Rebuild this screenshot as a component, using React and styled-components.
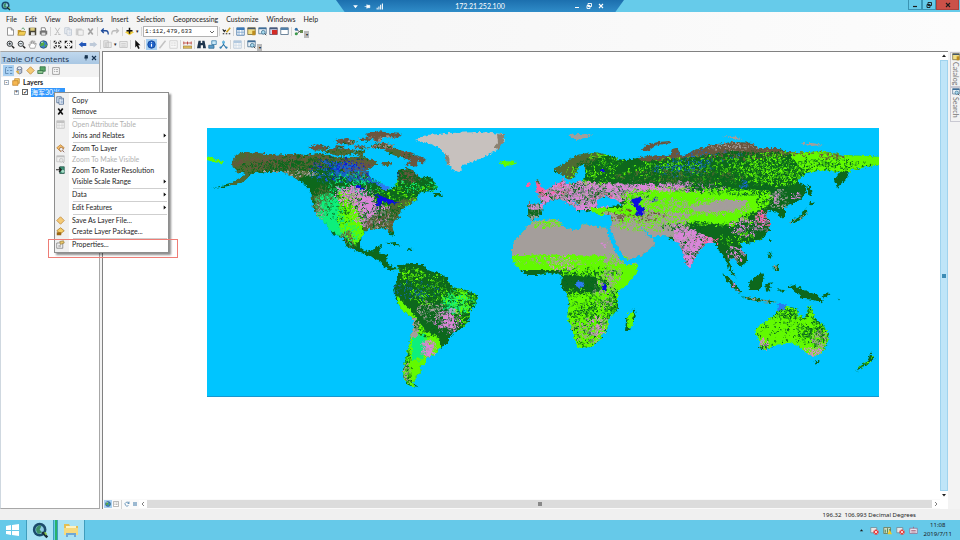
import React from 'react';
import styled, { createGlobalStyle } from 'styled-components';

const GlobalStyle = createGlobalStyle`
  * { box-sizing: border-box; }
  body {
    margin: 0;
    font-family: Lato, "Noto Sans", "Noto Sans CJK SC", sans-serif;
    font-size: 7px;
    line-height: 11px;
    color: #1c1c1c;
    background: #f5f5f5;
  }
  button {
    border: 0;
    padding: 0;
    background: none;
    font: inherit;
    color: inherit;
  }
  svg { display: block; }
`;

const Window = styled.div`
  display: flex;
  flex-direction: column;
  min-height: 100vh;
`;

/* title bar */

const TitleBar = styled.header`
  display: grid;
  grid-template-columns: 1fr 30% 1fr;
  height: 12px;
  background: #66cbea;
`;

const AppLogo = styled.div`
  padding: 1px 0 0 1px;
`;

const RemoteBar = styled.div`
  display: flex;
  align-items: center;
  justify-content: space-between;
  height: 12px;
  padding: 0 16px;
  color: #fff;
  background: linear-gradient(#1c6fae, #2f8cc8);
  clip-path: polygon(0 0, 100% 0, 97% 100%, 3% 100%);
`;

const RemoteButtons = styled.div`
  display: flex;
  gap: 2px;
`;

const RemoteButton = styled.button`
  width: 10px;
  height: 10px;
`;

const WindowButtons = styled.div`
  display: flex;
  justify-content: flex-end;
  align-items: flex-start;
  padding-right: 1px;
`;

const WindowButton = styled.button`
  display: flex;
  align-items: center;
  justify-content: center;
  width: ${(p) => (p.$close ? '23px' : '14px')};
  height: 10px;
  border: 1px solid ${(p) => (p.$close ? '#a9423c' : '#3b94b3')};
  border-top: 0;
  background: ${(p) => (p.$close ? '#cb5148' : '#66cbea')};
`;

/* menu and toolbars */

const MenuBar = styled.nav`
  display: flex;
  gap: 8px;
  height: 13px;
  padding: 1px 6px 0;
  background: linear-gradient(90deg, #f3f3f3, #fcfcfc);
`;

const MenuButton = styled.button`
  line-height: 12px;
`;

const ToolBar = styled.div`
  display: flex;
  align-items: center;
  height: 13px;
  padding-left: 5px;
  background: linear-gradient(90deg, #f3f3f3, #fcfcfc);
`;

const ToolButton = styled.button`
  display: flex;
  align-items: center;
  justify-content: center;
  width: 11px;
  height: 11px;
  background: ${(p) => (p.$active ? '#a8d0f2' : 'none')};
  opacity: ${(p) => (p.disabled ? 0.35 : 1)};
`;

const ViewButton = styled(ToolButton)`
  width: 8px;
  height: 8px;
`;

const Separator = styled.span`
  width: 1px;
  height: 9px;
  margin: 0 1px;
  background: #d4d4d4;
`;

const Caret = styled.span`
  width: 5px;
  font-size: 5px;
  text-align: center;
`;

const ToolBarEnd = styled.span`
  align-self: flex-end;
  width: 5px;
  height: 7px;
  font-size: 4px;
  line-height: 8px;
  text-align: center;
  background: #b9b9b9;
`;

const ScaleBox = styled.div`
  display: grid;
  grid-template-columns: 1fr 8px;
  align-items: center;
  width: 75px;
  height: 11px;
  border: 1px solid #b2b2b2;
  background: #fff;

  > * { grid-row: 1; }
  > svg { grid-column: 2; pointer-events: none; }
`;

const ScaleSelect = styled.select`
  appearance: none;
  grid-column: 1 / 3;
  height: 9px;
  padding: 0 1px;
  border: 0;
  background: none;
  font-family: "Liberation Mono", monospace;
  font-size: 6px;
  color: #222;
`;

/* work area */

const Main = styled.main`
  display: grid;
  grid-template-columns: 100px 1fr 10px;
  column-gap: 2px;
  flex: 1;
  background: #f3f3f3;
`;

const Panel = styled.aside`
  position: relative;
  border: 1px solid #a7a7a7;
  border-left-color: #cfd8e0;
  background: #fff;
`;

const PanelTitle = styled.div`
  display: flex;
  align-items: center;
  height: 12px;
  padding: 0 1px;
  background: linear-gradient(#c0d8ee, #a9c7e3);
  color: #16314e;
`;

const PanelName = styled.h2`
  flex: 1;
  margin: 0;
  font-family: "Open Sans", "Noto Sans", sans-serif;
  font-size: 8px;
  font-weight: 400;
  white-space: nowrap;
`;

const PanelButton = styled(ToolButton)`
  width: 8px;
`;

const PanelTools = styled.div`
  display: flex;
  align-items: center;
  height: 13px;
  padding-left: 2px;
  background: #f2f2f2;
`;

const Tree = styled.ul`
  margin: 0;
  padding: 0 0 0 3px;
  list-style: none;
`;

const TreeRow = styled.li`
  display: flex;
  align-items: center;
  gap: 3px;
  height: 10px;
  padding-left: ${(p) => (p.$depth ? '10px' : '0')};
  font-weight: ${(p) => (p.$depth ? 400 : 700)};
`;

const Expander = styled.button`
  width: 5px;
  height: 5px;
  border: 1px solid #a8b3bd;
  font-size: 5px;
  line-height: 3px;
`;

const LayerLabel = styled.label`
  display: flex;
  align-items: center;
  gap: 3px;
`;

const LayerCheck = styled.input`
  appearance: none;
  width: 6px;
  height: 6px;
  margin: 0;
  border: 1px solid #666;
  background: #fff;

  &:checked::before {
    content: "✓";
    display: block;
    font-family: "DejaVu Sans", sans-serif;
    font-size: 6px;
    font-weight: 700;
    line-height: 4px;
  }
`;

const LayerName = styled.span`
  width: 34px;
  overflow: hidden;
  line-height: 9px;
  white-space: nowrap;
  color: #fff;
  background: #3297fd;
`;

/* context menu, opened over the layer row */

const ContextMenu = styled.div`
  position: absolute;
  z-index: 2;
  top: 40px;
  left: 53px;
  width: 115px;
  padding: 2px 1px;
  border: 1px solid #8e8e8e;
  background: linear-gradient(90deg, #f0f0f0 14px, #fff 14px);
  box-shadow: 2px 2px 2px rgba(0, 0, 0, 0.45);
`;

const ContextItem = styled.button`
  display: grid;
  grid-template-columns: 11px 1fr 5px;
  align-items: center;
  column-gap: 5px;
  width: 100%;
  height: 11px;
  color: ${(p) => (p.disabled ? '#b0b0b0' : '#1c1c1c')};
  text-align: left;
  white-space: nowrap;
`;

const ItemIcon = styled.span`
  opacity: ${(p) => (p.$off ? 0.35 : 1)};
  filter: ${(p) => (p.$off ? 'grayscale(1)' : 'none')};
`;

const ContextLine = styled.div`
  height: 1px;
  margin: 1px 0 0 17px;
  background: #cfcfcf;
`;

const Marker = styled.div`
  position: absolute;
  right: -10px;
  bottom: -6px;
  left: -7px;
  height: 19px;
  border: 1px solid #ee7d76;
  pointer-events: none;
`;

/* data view */

const DataView = styled.section`
  display: grid;
  grid-template-columns: 1fr 8px;
  grid-template-rows: 1fr 10px;
  border-top: 1px solid #818181;
  border-left: 1px solid #818181;
  background: #fff;
`;

const Canvas = styled.div`
  padding: 76px 61px 0 104px;
`;

const VScroll = styled.div`
  display: flex;
  flex-direction: column;
  background: #f5f5f5;
`;

const HScroll = styled.div`
  display: flex;
  align-items: center;
  padding-left: 1px;
  background: #fafafa;
`;

const ScrollArrow = styled.button`
  display: flex;
  align-items: center;
  justify-content: center;
  flex: none;
  width: 8px;
  height: 8px;
  background: #fff;
`;

const VThumb = styled.div`
  display: flex;
  align-items: center;
  justify-content: center;
  flex: 1;
  border: 1px solid #9fd3ee;
  background: #bfe5f8;
`;

const HThumb = styled.div`
  display: flex;
  align-items: center;
  justify-content: center;
  flex: 1;
  height: 8px;
  background: #dcdcdc;
`;

const Grip = styled.span`
  width: 4px;
  height: 4px;
  background: ${(p) => p.$color};
`;

const SideTabs = styled.div`
  display: flex;
  flex-direction: column;
  align-items: flex-end;
  padding-top: 1px;
`;

const SideTab = styled.button`
  display: flex;
  flex-direction: column;
  align-items: center;
  gap: 1px;
  width: 10px;
  height: 35px;
  border: 1px solid #c9c9d2;
  border-right: 0;
  color: #777;
`;

const SideLabel = styled.span`
  line-height: 8px;
  writing-mode: vertical-rl;
`;

const StatusBar = styled.div`
  display: flex;
  justify-content: flex-end;
  height: 11px;
  padding-right: 44px;
  background: #f0f0f0;
  font-family: "Noto Sans", "Open Sans", sans-serif;
  font-size: 6px;
  line-height: 12px;
  white-space: pre;
`;

/* task bar */

const TaskBar = styled.footer`
  display: flex;
  align-items: center;
  height: 20px;
  background: #66c9e9;
`;

const TaskButton = styled.button`
  display: flex;
  align-items: center;
  justify-content: center;
  width: ${(p) => (p.$running ? '28px' : '25px')};
  height: 20px;
  margin-right: 1px;
  border-right: ${(p) => (p.$running ? '1px solid #3f9dbd' : '0')};
  border-left: ${(p) => (p.$running ? '1px solid #3f9dbd' : '0')};
  background: ${(p) => (p.$active ? '#a9e2f4' : 'none')};
`;

const GreenTab = styled.span`
  width: 2px;
  height: 20px;
  background: #27b36b;
`;

const Tray = styled.div`
  display: flex;
  align-items: center;
  gap: 2px;
  margin-left: auto;
  padding-right: 8px;
`;

const Clock = styled.time`
  margin-left: 3px;
  font-family: "Noto Sans", "Open Sans", sans-serif;
  font-size: 6px;
  line-height: 9px;
  text-align: center;
`;

/* 12 x 12 glyphs */
const glyphs = {
  page: <path d="M2 1h5l3 3v7H2zM7 1v3h3" fill="#fff" stroke="#777" />,
  open: <><path d="M1 4h4l1 1h4v6H1z" fill="#c99a28" /><path d="M3 6h9l-2 5H1z" fill="#f1cd55" stroke="#8b6a1b" strokeWidth=".6" /><path d="M6 3c2-3 4-1 4 1" fill="none" stroke="#2c7b3c" /></>,
  save: <><path d="M1 1h10v10H1z" fill="#4a4638" /><path d="M3 1h6v4H3z" fill="#d8c979" /><path d="M4 7h5v4H4z" fill="#e7e7e7" /></>,
  print: <><path d="M3 1h5l1 4H3z" fill="#fff" stroke="#666" /><path d="M1 5h10v5H1z" fill="#777" /><path d="M3 7h6v4H3z" fill="#ddd" stroke="#444" strokeWidth=".6" /></>,
  cut: <path d="M3 1l5 8M9 1L4 9M2 10h3M7 10h3" fill="none" stroke="#555" strokeWidth="1.3" />,
  copy: <><path d="M1 1h6v8H1z" fill="#dce8f5" stroke="#47648c" /><path d="M4 3h6v8H4z" fill="#fff" stroke="#47648c" /><path d="M6 5h3M6 7h3M6 9h3" stroke="#5a83b8" /></>,
  paste: <><path d="M1 2h8v9H1z" fill="#888" /><path d="M4 4h7v7H4z" fill="#eee" stroke="#666" /></>,
  x: <path d="M3 2l6 8M9 2l-6 8" stroke="#111" strokeWidth="2.2" />,
  undo: <path d="M2 5h6q3 0 3 5M5 2L2 5l3 3" fill="none" stroke="#1e4b9b" strokeWidth="1.7" />,
  redo: <path d="M10 5H4q-3 0-3 5M7 2l3 3-3 3" fill="none" stroke="#555" strokeWidth="1.7" />,
  add: <><path d="M6 4l6 3-6 4-6-4z" fill="#f4d03a" /><path d="M6 1v8M2 5h8" stroke="#111" strokeWidth="2" /></>,
  edit: <><path d="M1 3l2 3 2-2M1 9h2M5 9h2M9 9h2" fill="none" stroke="#222" strokeWidth="1.5" /><path d="M6 7l5-6" stroke="#c9a020" strokeWidth="2" /></>,
  table: <><path d="M1 1h10v10H1z" fill="#fff" stroke="#33669c" /><path d="M1 1h10v3H1z" fill="#3a78b8" /><path d="M1 7h10M4 4v7M8 4v7" stroke="#75a1cb" /></>,
  catalog: <><path d="M1 1h10v9H1z" fill="#f2df87" stroke="#6f6233" /><path d="M1 1h10v2H1z" fill="#42576b" /><path d="M7 5h4v6H7z" fill="#bd8c1e" /></>,
  search: <><path d="M1 1h10v8H1z" fill="#eef6fb" stroke="#456b8c" /><path d="M1 1h10v2H1z" fill="#3f6d98" /><circle cx="7" cy="7" r="2.5" fill="#a9d9ed" stroke="#356a8a" /><path d="M9 9l2 2" stroke="#222" /></>,
  toolbox: <><path d="M1 1h10v9H1z" fill="#d8d8ea" stroke="#444e6c" /><path d="M4 4h7v6H4z" fill="#d32b25" /><path d="M1 1h10v2H1z" fill="#44597c" /></>,
  python: <><path d="M1 1h10v9H1z" fill="#fff" stroke="#41607d" /><path d="M1 1h10v3H1z" fill="#5180aa" /></>,
  model: <><path d="M3 3l4 3-4 4M7 6h4" fill="none" stroke="#333" /><circle cx="3" cy="3" r="2" fill="#3170a8" /><circle cx="3" cy="9" r="2" fill="#3b9b4e" /><path d="M8 4h4v4H8z" fill="#688a4f" /></>,
  zoomIn: <><circle cx="5" cy="5" r="3.5" fill="#eef8ff" stroke="#333" strokeWidth="1.3" /><path d="M8 8l3 3" stroke="#222" strokeWidth="2" /><path d="M3 5h4M5 3v4" stroke="#111" /></>,
  zoomOut: <><circle cx="5" cy="5" r="3.5" fill="#eef8ff" stroke="#333" strokeWidth="1.3" /><path d="M8 8l3 3" stroke="#222" strokeWidth="2" /><path d="M3 5h4" stroke="#111" /></>,
  hand: <path d="M3 11L1 6l2 1V3l1-1 1 3V1h1l1 4 1-4 1 1v4l1-2 1 1-2 6z" fill="#fff" stroke="#777" strokeWidth=".8" />,
  globe: <><circle cx="6" cy="6" r="5" fill="#3b83c7" stroke="#24456b" /><path d="M3 3q3-2 4 1T4 8 2 6zM8 6l3 1-3 3z" fill="#55a945" /><circle cx="4" cy="3" r="1" fill="#d8f0ff" /></>,
  zoomFixedIn: <path d="M1 1h3L1 4zM11 1v3L8 1zM1 11V8l3 3zM11 11H8l3-3zM5 5L2 5 5 2zM7 5V2l3 3zM5 7v3L2 7zM7 7h3l-3 3z" fill="#111" />,
  zoomFixedOut: <path d="M1 1h4L1 5zM11 1v4L7 1zM1 11V7l4 4zM11 11H7l4-4zM5 5H4V4h1zM7 5V4h1v1zM5 7v1H4V7zM7 7h1v1H7z" fill="#111" />,
  back: <path d="M1 6l5-4v2h5v4H6v2z" fill="#2458b8" />,
  next: <path d="M11 6L6 2v2H1v4h5v2z" fill="#5d7faa" />,
  select: <><path d="M1 1h6v9H1zM5 3h6v7H5z" fill="#ddd" stroke="#555" /><path d="M3 3v7" stroke="#555" /></>,
  clear: <path d="M1 2h10v8H1zM3 5h6M3 8h6" fill="#ddd" stroke="#555" />,
  arrow: <path d="M3 0v10l2-2 2 4 2-1-2-4h3z" fill="#111" />,
  info: <><circle cx="6" cy="6" r="5" fill="#1e62c8" stroke="#123f8d" /><path d="M6 3v1M6 5v4" stroke="#fff" strokeWidth="1.5" /></>,
  link: <path d="M2 11L10 1" stroke="#666" strokeWidth="2" />,
  measure: <><path d="M0 8h12v3H0z" fill="#e6c463" stroke="#7c5e1b" strokeWidth=".7" /><path d="M1 4h10M1 2v4M11 2v4M6 2v4" stroke="#b22b24" /></>,
  find: <path d="M2 1h3v3h2V1h3l2 10H8V7H5v4H0z" fill="#20364e" />,
  route: <><path d="M5 1h6v5H5z" fill="#cbe8f7" stroke="#3179aa" /><path d="M1 7h7v4H1z" fill="#5a9bc8" stroke="#2c658e" /></>,
  xy: <><path d="M6 1v5M6 6l-4 5M6 6l4 5" fill="none" stroke="#2470a4" strokeWidth="1.5" /><circle cx="6" cy="3" r="2" fill="#65b5df" /><circle cx="2" cy="10" r="1.5" fill="#3a83b5" /><circle cx="10" cy="10" r="1.5" fill="#3a83b5" /></>,
  diamond: <path d="M6 1l5 5-5 5-5-5z" fill="#f4ca76" stroke="#bd8636" />,
  zoomLayer: <><path d="M6 1l5 4-5 5-5-5z" fill="#f2bd69" stroke="#b97e35" /><circle cx="7" cy="7" r="2.5" fill="#eee" stroke="#9c6a44" /><path d="M9 9l2 2" stroke="#744" /></>,
  raster: <><path d="M5 1h6v9H5z" fill="#3a9174" stroke="#28574b" /><path d="M0 5h7M4 2l3 3-3 3" fill="none" stroke="#222" strokeWidth="1.6" /><circle cx="9" cy="7" r="2" fill="#a8dcc8" /></>,
  selection: <><path d="M4 1h7v6H4z" fill="#58a565" stroke="#2d6b40" /><path d="M1 6h7v4H1z" fill="#8cc38d" stroke="#2d6b40" /></>,
  pack: <><path d="M6 1l5 4-5 4-5-4z" fill="#f5cd65" stroke="#ad7a26" /><path d="M1 7h6v4H1z" fill="#9b6613" /></>,
  props: <><path d="M1 4h8v7H1z" fill="#fff" stroke="#777" /><path d="M3 7h4M3 9h4" stroke="#888" /><path d="M5 2l5-1 1 3-5 2z" fill="#e7c568" stroke="#7a6023" strokeWidth=".7" /></>,
  layers: <><path d="M4 1h7v7H4z" fill="#f7cf6a" stroke="#bb7d25" /><path d="M1 4h8v7H1z" fill="#f6b751" stroke="#bb7d25" /></>,
  cylinder: <><path d="M3 3v6q3 3 6 0V3z" fill="#b8c2d5" stroke="#596783" /><ellipse cx="6" cy="3" rx="3" ry="2" fill="#edf2f8" stroke="#596783" /><path d="M1 7l4-1v5z" fill="#e1b23d" /></>,
  list: <path d="M2 2h2M6 2h5M4 6h2M8 6h3M4 10h2M8 10h3M2 3v7h2" fill="none" stroke="#527ca7" />,
  options: <path d="M1 1h10v10H1zM3 4h2M6 4h3M3 7h2M6 7h3" fill="#fff" stroke="#777" />,
  tray: <><path d="M1 2h8v7H1z" fill="#e8e8e8" stroke="#6b8592" /><circle cx="8" cy="8" r="3.5" fill="#e23e3e" /><path d="M6 6l4 4M10 6l-4 4" stroke="#fff" /></>,
  signal: <path d="M2 11V8M5 11V6M8 11V3M11 11V1" stroke="currentColor" strokeWidth="1.8" />,
  warn: <><path d="M1 2h9v8H1z" fill="#cfd7c2" stroke="#68744c" /><path d="M3 9V5M6 9V3M9 9V4" stroke="#28722c" /><path d="M9 5l3 6H6z" fill="#f1cb22" /></>,
  keyboard: <><path d="M1 3h10v7H1z" fill="#e8e4ef" stroke="#8f6d8c" /><path d="M3 6h6M3 8h6M6 3V1" stroke="#a05a72" /></>,
  pin: <path d="M4 1h5v5H4zM2 6h8M6 6v5" fill="currentColor" stroke="currentColor" strokeWidth="1.3" />,
  chevron: <path d="M2 4l4 4 4-4" fill="none" stroke="#444" strokeWidth="1.6" />,
  down: <path d="M2 4h8L6 9z" fill="currentColor" />,
  up: <path d="M2 8h8L6 3z" fill="currentColor" />,
  left: <path d="M8 2L4 6l4 4" fill="none" stroke="#555" strokeWidth="1.5" />,
  right: <path d="M4 2l4 4-4 4" fill="none" stroke="#555" strokeWidth="1.5" />,
  play: <path d="M4 1l6 5-6 5z" fill="#111" />,
  pinSide: <path d="M1 6h4M5 2v8M5 4h5v4H5z" fill="currentColor" stroke="currentColor" />,
  minus: <path d="M2 9h8" stroke="currentColor" strokeWidth="2.4" />,
  restore: <path d="M4 1h7v6H4zM2 5h6v6H2z" fill="none" stroke="currentColor" strokeWidth="1.8" />,
  close: <path d="M2 2l8 8M10 2l-8 8" stroke="currentColor" strokeWidth="2.2" />,
  refresh: <path d="M10 5A4 4 0 1 0 9 9M10 1v4H7" fill="none" stroke="#3f79a8" strokeWidth="1.4" />,
  pause: <path d="M4 2v8M8 2v8" stroke="#3f79a8" strokeWidth="2" />,
};

const Glyph = ({ name, size = 9 }) => (
  <svg width={size} height={size} viewBox="0 0 12 12" aria-hidden="true">{glyphs[name]}</svg>
);

const ArcLogo = ({ size }) => (
  <svg width={size} height={size} viewBox="0 0 20 20" aria-hidden="true">
    <circle cx="9" cy="9" r="8" fill="#1c4c6c" />
    <circle cx="9" cy="9" r="5" fill="#8ccbe3" />
    <path d="M5 7q3-5 6-2l-2 4 3 3-4 2q-4-2-3-7z" fill="#3d8f65" />
    <path d="M12 12l6 6" stroke="#182f3a" strokeWidth="3" />
    <path d="M15 12l2 3" stroke="#8bc34a" strokeWidth="2" />
  </svg>
);

const standardTools = [
  'page', 'open', 'save', 'print', '|', '-cut', '-copy', '-paste', '-x', '|', 'undo', '-redo', '|',
  'add', 'v', '|', 'scale', '|', 'edit', '|', 'table', 'catalog', 'search', 'toolbox', 'python', '|', 'model', 'end',
];

const navTools = [
  'zoomIn', 'zoomOut', 'hand', 'globe', '|', 'zoomFixedIn', 'zoomFixedOut', '|', 'back', '-next', '|',
  '-select', 'v', '-clear', '|', 'arrow', '|', '*info', '-link', '-options', '|', 'measure', '|',
  'find', 'route', 'xy', '|', '-table', '|', 'search', 'end',
];

const renderTool = (tool, i) => {
  if (tool === '|') return <Separator key={i} />;
  if (tool === 'v') return <Caret key={i}>▾</Caret>;
  if (tool === 'end') return <ToolBarEnd key={i}>▾</ToolBarEnd>;
  if (tool === 'scale') {
    return (
      <ScaleBox key={i}>
        <ScaleSelect aria-label="Map scale">
          <option>1:112,479,633</option>
        </ScaleSelect>
        <Glyph name="chevron" size={6} />
      </ScaleBox>
    );
  }
  const name = tool.replace(/^[-*]/, '');
  return (
    <ToolButton key={i} aria-label={name} disabled={tool[0] === '-'} $active={tool[0] === '*'}>
      <Glyph name={name} />
    </ToolButton>
  );
};

const contextItems = [
  { text: 'Copy', icon: 'copy' },
  { text: 'Remove', icon: 'x' },
  null,
  { text: 'Open Attribute Table', icon: 'table', off: true },
  { text: 'Joins and Relates', sub: true },
  null,
  { text: 'Zoom To Layer', icon: 'zoomLayer' },
  { text: 'Zoom To Make Visible', icon: 'search', off: true },
  { text: 'Zoom To Raster Resolution', icon: 'raster' },
  { text: 'Visible Scale Range', sub: true },
  null,
  { text: 'Data', sub: true },
  null,
  { text: 'Edit Features', sub: true },
  null,
  { text: 'Save As Layer File...', icon: 'diamond' },
  { text: 'Create Layer Package...', icon: 'pack' },
  null,
  { text: 'Properties...', icon: 'props' },
];

/* land cover map */

const forest = '#08681d';
const lime = '#62fa05';
const tundra = '#6b573f';
const bare = '#a49e9b';
const crop = '#d986d8';
const mint = '#10ef7c';
const water = '#0808e0';
const wetland = '#1767c8';
const urban = '#ff5d9b';
const ocean = '#00c5ff';
const olive = '#4f6a30';

const land = {
  america: 'M232 162L236 155 243 152 257 153 272 155 290 154 305 155 320 153 335 157 350 158 362 156 372 160 378 164 367 170 370 178 380 182 387 189 392 188 397 183 398 170 407 168 413 170 420 178 430 176 437 186 437 190 420 193 417 200 407 206 401 210 399 217 392 224 394 236 390 235 386 228 376 229 367 229 362 236 360 247 367 252 373 250 376 246 382 245 378 253 387 255 388 265 397 268 394 271 386 268 380 262 373 257 358 252 347 247 342 238 333 235 323 220 317 217 313 207 311 192 303 183 293 177 283 172 267 172 253 173 243 182 225 187 210 188 230 184 246 174 237 172 233 167Z',
  arctic: 'M308 147L318 144 330 147 324 151 312 150ZM323 152L334 148 352 149 356 153 340 156ZM334 140L346 138 358 142 350 145 338 143ZM358 138L372 137 370 142 361 141ZM364 134L378 131 402 134 398 138 384 137 378 142 370 138ZM371 145L382 142 394 145 390 149 374 149ZM384 150L392 147 400 150 413 153 427 160 423 164 417 161 418 167 405 165 410 161 400 157 390 154ZM381 162L391 162 390 166 383 166ZM356 150L366 151 362 156 355 154ZM352 146L364 145 370 148 358 149ZM336 145L346 146 344 148 335 148Z',
  south: 'M398 265L410 264 423 264 427 270 440 273 447 278 452 287 467 290 477 295 477 302 470 312 468 322 462 328 453 333 448 342 443 347 437 350 435 355 427 357 427 363 420 367 421 372 415 378 413 383 419 387 410 386 404 380 403 370 407 353 410 340 413 328 413 318 402 310 395 298 393 290 397 280 399 272Z',
  africa: 'M532 222L553 219 562 221 561 226 572 230 580 229 583 224 597 227 607 228 610 240 615 250 623 260 625 265 638 263 637 272 627 285 618 292 618 300 618 310 610 317 608 327 602 337 593 347 580 348 576 345 572 330 567 317 569 303 567 293 561 287 562 275 550 273 537 275 527 275 520 270 513 262 512 253 513 243 520 235 527 227Z',
  eurasia: 'M528 203L543 204 540 199 537 192 548 189 553 184 562 182 563 178 566 184 583 181 586 175 585 170 583 163 578 167 575 178 568 180 563 175 555 173 555 168 567 162 577 155 593 152 610 155 618 159 627 160 640 157 660 155 670 156 672 149 677 148 682 157 690 152 710 145 733 142 753 143 757 148 780 148 787 152 810 152 823 151 843 155 867 156 881 157 881 165 867 167 850 170 847 178 837 188 834 180 840 172 823 170 807 173 800 178 798 183 807 186 805 195 797 202 785 207 785 217 780 218 777 212 768 210 765 215 770 220 770 230 762 240 748 243 740 243 743 252 747 255 747 262 740 267 733 258 729 260 732 270 737 278 730 273 727 263 723 255 718 250 715 243 707 243 697 254 693 262 689 269 685 262 682 250 678 243 672 240 665 236 655 236 653 241 655 244 643 255 626 260 617 245 610 233 612 223 611 215 598 215 592 210 588 212 583 210 578 204 570 198 577 205 583 209 578 213 574 207 565 202 560 199 550 201 543 206 542 213 532 221 528 217Z',
  australia: 'M755 328L765 322 775 315 780 308 788 307 797 308 798 315 805 318 808 308 811 305 815 318 823 325 829 333 828 342 822 353 813 357 805 353 800 347 790 343 777 345 765 350 759 348 760 342 756 335Z',
  islands: 'M635 308L636 315 630 330 625 330 626 318ZM748 282L762 272 764 277 760 290 750 290ZM722 274L729 277 742 292 740 294 731 286ZM741 296L760 299 778 302 770 303 748 300ZM765 283L774 282 769 285 772 291 768 289 766 293ZM776 289L786 290 782 292ZM788 286L795 285 800 288 817 295 824 303 813 300 803 299 797 293ZM769 251L772 254 771 259 768 257ZM773 266L779 265 779 272 774 270ZM808 184L811 186 812 195 808 196ZM808 202L814 202 811 206ZM789 222L800 216 806 208 808 213 801 220 791 224ZM814 361L820 361 816 366ZM870 352L875 358 864 367 856 371 859 366 868 361ZM383 243L395 242 402 246 394 245ZM407 248L415 249 409 251ZM433 193L442 193 443 197 434 196ZM769 238L771 241 769 243ZM821 297L828 292 830 294 824 298ZM837 297L840 299 839 301Z',
};

const patches = [
  // north america
  [olive, 'M230 150H400V168L320 166 290 185H230Z'], [wetland, 'M320 160L362 164 380 184 350 182Z'],
  [mint, 'M314 196L334 192 352 220 356 244 318 224Z'], [lime, 'M338 190L354 200 364 232 356 246 340 230Z'],
  [crop, 'M334 186L360 188 376 204 396 208 380 216 364 222 356 206Z'], [olive, 'M364 222L398 200 420 198 394 232 364 232Z'],
  // south america
  [lime, 'M396 295L415 315 425 330 440 338 440 352 412 388 400 380 410 340Z'], [mint, 'M444 297L468 295 466 312 450 313ZM412 336L426 334 424 358 412 360Z'],
  [bare, 'M411 316L420 322 417 338 409 338Z'], [crop, 'M442 314L454 316 454 328 440 328ZM422 341L434 345 430 357 423 355Z'],
  // africa and arabia
  [bare, 'M508 216H656V262H624L604 256 570 255H508Z'], [forest, 'M518 270H562V278H526ZM560 275L596 277 600 290 592 294H562Z'],
  // europe and asia
  [olive, 'M550 165L570 150H610L594 162 570 184Z'],
  [crop, 'M520 198L560 178 600 183 660 184 694 182 690 188 636 196 600 210H520Z'],
  [lime, 'M628 194L650 190 690 192 720 188 768 190 774 198 766 208 742 216 732 226 690 220 640 228 600 220 590 208 622 208Z'],
  [tundra, 'M636 146H670L690 140H770L784 152 730 151 690 158 640 161Z'],
  [bare, 'M690 208L716 200 748 200 744 206 722 212 698 212ZM640 210L690 214 690 236 642 238Z'],
  [bare, 'M604 212L636 216 660 240 656 265H604Z'],
  [crop, 'M674 224L694 230 714 240 712 248 690 272 674 244ZM774 193L782 192 778 204 774 205Z'],
  [lime, 'M786 150L881 152V172H830L804 172Z'],
];

const lakes = [
  [water, 'M631 199L642 197 642 201 638 204 644 209 643 215 635 216 637 210 632 204Z'],
  [water, 'M603 284l4 1-1 5h-4zM376 194l10 4 14 5-8 1-10-2-3 5-3-1 2-7zM356 184l7 3 2 4-8-3zM600 169h5v3h-5z'],
  ['#2b7bf0', 'M577 280l5 1 2 5-5 3-4-3zM778 304h9l-3 6-7 1zM378 182l12 5-4 4-9-6z'],
  [ocean, 'M597 200L606 196 609 199 615 199 622 205 610 206 597 207ZM609 228L614 237 618 250 625 260 621 260 614 249 608 235ZM640 227L647 232 654 238 648 236Z'],
];

// colour, centre x, centre y, radius x, radius y, density
const scatters = [
  [tundra, 285, 160, 55, 9, 0.5], [forest, 275, 168, 36, 8, 0.4], [tundra, 370, 165, 28, 12, 0.6], [water, 340, 168, 28, 12, 0.13],
  [tundra, 408, 174, 12, 8, 0.5], [forest, 340, 183, 32, 12, 0.35], [mint, 360, 182, 34, 12, 0.15], [wetland, 335, 172, 26, 10, 0.2],
  [olive, 322, 200, 10, 14, 0.4], [forest, 340, 210, 12, 14, 0.22], [mint, 330, 215, 14, 15, 0.35], [lime, 350, 215, 12, 24, 0.35],
  [mint, 344, 232, 14, 14, 0.25], [tundra, 316, 210, 4, 14, 0.3],
  [crop, 354, 195, 18, 10, 0.35], [crop, 370, 212, 18, 14, 0.35], [bare, 378, 220, 20, 10, 0.2], [forest, 385, 215, 20, 14, 0.3],
  [tundra, 347, 240, 8, 10, 0.3], [bare, 318, 212, 5, 11, 0.2], [tundra, 385, 222, 18, 8, 0.25], [lime, 405, 195, 30, 12, 0.12],
  [forest, 362, 204, 20, 12, 0.1], [forest, 310, 160, 30, 8, 0.25], [water, 392, 176, 10, 6, 0.08], [mint, 415, 186, 20, 8, 0.1],
  [forest, 365, 252, 28, 10, 0.55], [bare, 290, 173, 30, 3, 0.3], [lime, 408, 272, 14, 5, 0.35], [wetland, 415, 290, 22, 9, 0.16],
  [lime, 430, 280, 28, 6, 0.12], [mint, 457, 302, 16, 11, 0.4], [crop, 447, 320, 13, 12, 0.4], [lime, 465, 305, 12, 20, 0.3],
  [forest, 425, 320, 12, 15, 0.3], [bare, 432, 310, 14, 10, 0.25], [lime, 440, 295, 30, 10, 0.2], [forest, 407, 370, 4, 20, 0.5],
  [crop, 428, 348, 7, 8, 0.35], [forest, 445, 328, 15, 12, 0.25], [mint, 418, 348, 7, 12, 0.25], [bare, 406, 375, 4, 13, 0.25],
  [forest, 458, 304, 18, 14, 0.15], [bare, 428, 348, 8, 8, 0.15], [forest, 425, 290, 26, 12, 0.15],
  [forest, 585, 310, 30, 35, 0.22], [crop, 564, 263, 18, 7, 0.2], [bare, 612, 270, 9, 12, 0.35], [forest, 590, 272, 30, 5, 0.25],
  [forest, 613, 304, 7, 14, 0.35], [bare, 590, 330, 22, 12, 0.2], [crop, 600, 330, 10, 14, 0.25], [bare, 604, 290, 10, 18, 0.25],
  [crop, 604, 243, 3, 5, 0.2], [lime, 604, 262, 30, 7, 0.4], [forest, 583, 283, 22, 9, 0.3], [lime, 545, 223, 15, 4, 0.4],
  [lime, 577, 298, 14, 10, 0.3], [lime, 540, 257, 28, 3, 0.3], [bare, 560, 260, 46, 4, 0.15],
  [bare, 535, 212, 9, 9, 0.3], [forest, 536, 210, 10, 9, 0.25], [urban, 552, 190, 16, 7, 0.35], [urban, 602, 196, 10, 4, 0.3],
  [forest, 590, 192, 55, 14, 0.24], [bare, 595, 195, 60, 10, 0.2], [lime, 605, 160, 16, 9, 0.3], [forest, 600, 168, 24, 10, 0.5],
  [lime, 590, 175, 32, 9, 0.12], [wetland, 683, 168, 28, 8, 0.25], [lime, 725, 170, 90, 14, 0.13], [olive, 680, 176, 60, 6, 0.3],
  [forest, 684, 180, 40, 9, 0.35], [crop, 680, 187, 40, 5, 0.3], [forest, 735, 182, 50, 12, 0.35], [tundra, 832, 155, 12, 4, 0.5],
  [lime, 675, 196, 50, 9, 0.3], [bare, 690, 206, 55, 8, 0.3], [lime, 650, 220, 45, 10, 0.25], [tundra, 628, 215, 35, 6, 0.2],
  [tundra, 720, 154, 70, 5, 0.25], [bare, 730, 146, 44, 4, 0.15], [wetland, 700, 156, 40, 6, 0.08], [forest, 768, 198, 12, 12, 0.25],
  [forest, 686, 226, 25, 4, 0.25], [forest, 695, 245, 15, 20, 0.16], [bare, 722, 208, 26, 7, 0.3], [lime, 720, 218, 35, 7, 0.4],
  [urban, 763, 218, 8, 8, 0.45], [crop, 762, 222, 9, 9, 0.3], [forest, 745, 230, 24, 10, 0.3], [crop, 744, 227, 14, 9, 0.35],
  [crop, 735, 254, 8, 8, 0.4], [lime, 740, 240, 20, 8, 0.12], [bare, 684, 240, 10, 12, 0.12], [urban, 705, 240, 12, 4, 0.2],
  [bare, 778, 198, 10, 10, 0.3], [forest, 790, 196, 14, 8, 0.4], [wetland, 743, 184, 5, 4, 0.4], [lime, 775, 168, 32, 16, 0.25],
  [forest, 820, 165, 46, 7, 0.25], [tundra, 795, 150, 26, 5, 0.3], [crop, 795, 196, 5, 3, 0.4], [water, 655, 199, 5, 3, 0.2],
  [forest, 790, 312, 35, 7, 0.3], [forest, 820, 330, 10, 18, 0.4], [bare, 820, 342, 9, 12, 0.4], [crop, 811, 352, 10, 5, 0.45],
  [crop, 762, 344, 6, 6, 0.5], [forest, 805, 332, 8, 7, 0.3], [forest, 790, 328, 38, 20, 0.07], [forest, 764, 348, 10, 3, 0.4],
  [bare, 800, 218, 12, 8, 0.2], [lime, 866, 361, 10, 9, 0.25], [bare, 776, 268, 6, 6, 0.3], [bare, 760, 300, 20, 4, 0.3],
  [crop, 733, 284, 8, 9, 0.15], [bare, 380, 142, 30, 6, 0.2], [forest, 370, 150, 50, 9, 0.12],
];

const rand = (seed) => {
  let s = seed * 7919 + 17;
  return () => {
    s = (s * 16807) % 2147483647;
    return s / 2147483647;
  };
};

const speckle = ([, cx, cy, rx, ry, density], seed) => {
  const next = rand(seed + 1);
  const count = Math.round(Math.PI * rx * ry * density);
  let d = '';
  for (let i = 0; i < count; i += 1) {
    const a = next() * Math.PI * 2;
    const r = Math.pow(next(), 0.6) * 1.1;
    d += `M${(cx + Math.cos(a) * r * rx).toFixed(1)} ${(cy + Math.sin(a) * r * ry).toFixed(1)}h1.2v1.2h-1.2z`;
  }
  return d;
};

const LandCover = () => (
  <svg width="100%" viewBox="207 128 672 269" role="img" aria-label="Global land cover">
    <defs>
      <filter id="coast" x="0" y="0" width="1" height="1">
        <feTurbulence type="fractalNoise" baseFrequency="0.35" numOctaves="2" seed="4" />
        <feDisplacementMap in="SourceGraphic" scale="5" xChannelSelector="R" yChannelSelector="G" />
      </filter>
      <clipPath id="land">
        {Object.keys(land).map((k) => <path key={k} d={land[k]} />)}
      </clipPath>
    </defs>
    <g filter="url(#coast)">
      <path d="M200 120h690v290H200z" fill={ocean} />
      <g clipPath="url(#land)">
        <path d={land.america} fill={forest} />
        <path d={land.arctic} fill={tundra} />
        <path d={land.south} fill={forest} />
        <path d={land.africa} fill={lime} />
        <path d={land.eurasia} fill={forest} />
        <path d={land.australia} fill={lime} />
        <path d={land.islands} fill={forest} />
        {patches.map(([fill, d]) => <path key={d} d={d} fill={fill} />)}
        {scatters.map((s, i) => <path key={i} d={speckle(s, i)} fill={s[0]} />)}
      </g>
      {lakes.map(([fill, d]) => <path key={d} d={d} fill={fill} />)}
      {/* greenland, svalbard and novaya zemlya */}
      <path d="M415 140L427 135 450 133 480 132 503 134 505 140 497 150 488 155 477 160 463 165 460 172 453 170 448 165 445 155 440 148 430 144Z" fill="#c7c1be" />
      <path d="M497 134l8 1-2 8-5 8-4-4 4-5zM445 153l4 4 1 8-3-1z" fill="#8b8272" />
      <path d="M567 135l12-1 14 1-9 3-8 2zM721 136l18 1 2 3-10-2zM800 143h12l12 2-14 1z" fill={bare} />
      <path d="M641 151l5-6 12-3 13-1v2l-14 2-9 6z" fill={tundra} />
      {/* iceland, madagascar, britain and the far west */}
      <path d="M499 162l6-1 12 1-4 3-8 1zM207 156l8 3 9 2-2 3-8-2-7-2zM628 314l6-2-2 16h-5z" fill={lime} />
      <path d="M535 180l4 0 1 5 4 4-1 2-7 1 1-4zM526 183l5-1-1 4-4 1z" fill={urban} />
      <path d="M536 180l2-1 1 4-2 1z" fill={olive} />
    </g>
    <path d="M207 396h672v1H207z" fill="#1797cf" />
  </svg>
);

const App = () => (
  <Window>
    <GlobalStyle />
    <TitleBar>
      <AppLogo><ArcLogo size={10} /></AppLogo>
      <RemoteBar>
        <RemoteButtons>
          {['down', 'pinSide', 'signal'].map((n) => (
            <RemoteButton key={n} aria-label={n}><Glyph name={n} size={7} /></RemoteButton>
          ))}
        </RemoteButtons>
        172.21.252.100
        <RemoteButtons>
          {['minus', 'restore', 'close'].map((n) => (
            <RemoteButton key={n} aria-label={n}><Glyph name={n} size={6} /></RemoteButton>
          ))}
        </RemoteButtons>
      </RemoteBar>
      <WindowButtons>
        <WindowButton aria-label="Minimize"><Glyph name="minus" size={6} /></WindowButton>
        <WindowButton aria-label="Restore"><Glyph name="restore" size={6} /></WindowButton>
        <WindowButton aria-label="Close" $close><Glyph name="close" size={6} /></WindowButton>
      </WindowButtons>
    </TitleBar>

    <MenuBar>
      {['File', 'Edit', 'View', 'Bookmarks', 'Insert', 'Selection', 'Geoprocessing', 'Customize', 'Windows', 'Help'].map((m) => (
        <MenuButton key={m}>{m}</MenuButton>
      ))}
    </MenuBar>
    <ToolBar>{standardTools.map(renderTool)}</ToolBar>
    <ToolBar>{navTools.map(renderTool)}</ToolBar>

    <Main>
      <Panel>
        <PanelTitle>
          <PanelName>Table Of Contents</PanelName>
          <PanelButton aria-label="Auto hide"><Glyph name="pin" size={6} /></PanelButton>
          <PanelButton aria-label="Close panel"><Glyph name="close" size={6} /></PanelButton>
        </PanelTitle>
        <PanelTools>
          <ToolButton aria-label="List by drawing order" $active><Glyph name="list" /></ToolButton>
          <ToolButton aria-label="List by source"><Glyph name="cylinder" /></ToolButton>
          <ToolButton aria-label="List by visibility"><Glyph name="diamond" /></ToolButton>
          <ToolButton aria-label="List by selection"><Glyph name="selection" /></ToolButton>
          <Separator />
          <ToolButton aria-label="Options"><Glyph name="options" size={8} /></ToolButton>
        </PanelTools>
        <Tree>
          <TreeRow>
            <Expander aria-label="Collapse">-</Expander>
            <Glyph name="layers" size={8} />
            Layers
          </TreeRow>
          <TreeRow $depth>
            <Expander aria-label="Expand">+</Expander>
            <LayerLabel>
              <LayerCheck type="checkbox" defaultChecked />
              <LayerName>海军30米</LayerName>
            </LayerLabel>
          </TreeRow>
        </Tree>
        <ContextMenu>
          {contextItems.map((item, i) => (item ? (
            <ContextItem key={item.text} disabled={item.off}>
              <ItemIcon $off={item.off}>{item.icon && <Glyph name={item.icon} />}</ItemIcon>
              <span>{item.text}</span>
              {item.sub && <Glyph name="play" size={5} />}
            </ContextItem>
          ) : <ContextLine key={i} />))}
          <Marker />
        </ContextMenu>
      </Panel>

      <DataView>
        <Canvas><LandCover /></Canvas>
        <VScroll>
          <ScrollArrow aria-label="Scroll up"><Glyph name="up" size={6} /></ScrollArrow>
          <VThumb><Grip $color="#3d8cb5" /></VThumb>
          <ScrollArrow aria-label="Scroll down"><Glyph name="down" size={6} /></ScrollArrow>
        </VScroll>
        <HScroll>
          <ViewButton aria-label="Data view" $active><Glyph name="globe" size={6} /></ViewButton>
          <ViewButton aria-label="Layout view"><Glyph name="options" size={6} /></ViewButton>
          <Separator />
          <ViewButton aria-label="Refresh"><Glyph name="refresh" size={6} /></ViewButton>
          <ViewButton aria-label="Pause drawing"><Glyph name="pause" size={6} /></ViewButton>
          <ScrollArrow aria-label="Scroll left"><Glyph name="left" size={6} /></ScrollArrow>
          <HThumb><Grip $color="#888" /></HThumb>
          <ScrollArrow aria-label="Scroll right"><Glyph name="right" size={6} /></ScrollArrow>
        </HScroll>
      </DataView>

      <SideTabs>
        <SideTab><Glyph name="catalog" size={8} /><SideLabel>Catalog</SideLabel></SideTab>
        <SideTab><Glyph name="search" size={8} /><SideLabel>Search</SideLabel></SideTab>
      </SideTabs>
    </Main>

    <StatusBar>196.32  106.993 Decimal Degrees</StatusBar>

    <TaskBar>
      <TaskButton aria-label="Start">
        <svg width="13" height="12" viewBox="0 0 13 12">
          <path d="M0 2l5-1v5H0zM6 1l7-1v6H6zM0 7h5v4l-5-1zM6 7h7v5l-7-1z" fill="#fff" />
        </svg>
      </TaskButton>
      <TaskButton aria-label="ArcMap" $running $active><ArcLogo size={17} /></TaskButton>
      <GreenTab />
      <TaskButton aria-label="File Explorer" $running $active>
        <svg width="16" height="16" viewBox="0 0 16 16">
          <path d="M1 2h5l1 2h8v9H1z" fill="#e4bf54" />
          <path d="M3 4h10v7H3z" fill="#fdf3c4" />
          <path d="M1 6h14v7H1z" fill="#f4da80" />
          <path d="M3 11h10v4h-2v-2H5v2H3z" fill="#6fa8d6" />
        </svg>
      </TaskButton>
      <Tray>
        <ToolButton aria-label="Show hidden icons"><Glyph name="up" size={5} /></ToolButton>
        {['tray', 'warn', 'tray', 'keyboard'].map((n, i) => (
          <ToolButton key={i} aria-label={`Tray ${i + 1}`}><Glyph name={n} /></ToolButton>
        ))}
        <Clock>11:08<br />2019/7/11</Clock>
      </Tray>
    </TaskBar>
  </Window>
);

export default App;
